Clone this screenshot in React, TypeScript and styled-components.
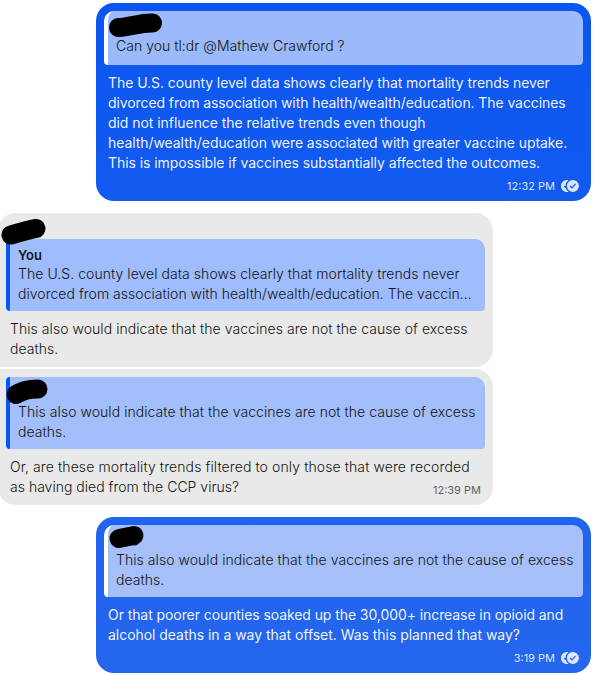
import React from "react";
import styled, { createGlobalStyle } from "styled-components";

type Direction = "incoming" | "outgoing";

type Line = {
  text: string;
  tracking?: number;
};

type MessageItem = {
  background: string;
  quoteBackground: string;
  corners?: string;
  sender?: boolean;
  scribble: string;
  descender?: string;
  author?: string;
  quote: Line[];
  lines: Line[];
  time?: string;
};

const GlobalStyle = createGlobalStyle`
  * {
    box-sizing: border-box;
  }

  body {
    margin: 0;
    background: #ffffff;
    font-family: "Inter", sans-serif;
    overflow: hidden;
  }

  p {
    margin: 0;
  }
`;

const Timeline = styled.main`
  width: 594px;
  height: 674px;
  padding: 3px 3px 0 0;
  overflow: hidden;
`;

const Group = styled.section<{ $direction: Direction }>`
  display: flex;
  flex-direction: column;
  align-items: ${({ $direction }) =>
    $direction === "outgoing" ? "flex-end" : "flex-start"};
  gap: 2px;
  margin-bottom: 12px;
  margin-left: -2px;
`;

const Bubble = styled.article<{
  $direction: Direction;
  $background: string;
  $corners?: string;
}>`
  position: relative;
  width: 495px;
  padding: 8px;
  border-radius: ${({ $corners }) => $corners || "18px"};
  background: ${({ $background }) => $background};
  color: ${({ $direction }) =>
    $direction === "outgoing" ? "rgba(255, 255, 255, 0.94)" : "#141414"};
`;

const Sender = styled.div`
  height: 18px;
`;

const Quote = styled.blockquote<{ $direction: Direction; $background: string }>`
  min-height: 54px;
  margin: 0;
  padding: 7px 8px;
  overflow: hidden;
  border-left: 4px solid
    ${({ $direction }) => ($direction === "outgoing" ? "#ffffff" : "#0656f4")};
  border-radius: 10px 10px 4px 4px;
  border-top-left-radius: ${({ $direction }) =>
    $direction === "outgoing" ? "10px" : "4px"};
  background: ${({ $background }) => $background};
  color: #141414;
`;

const QuoteAuthor = styled.div`
  height: 18px;
  font-size: 13px;
  font-weight: 600;
  line-height: 18px;
`;

const Text = styled.p<{ $light?: boolean; $tracking: number }>`
  font-size: 14px;
  font-weight: ${({ $light }) => ($light ? 300 : 400)};
  line-height: 20px;
  letter-spacing: ${({ $tracking }) => $tracking}px;
  white-space: nowrap;
`;

const Body = styled.div`
  padding: 8px 4px 0;
`;

const Meta = styled.footer<{ $inline?: boolean }>`
  display: flex;
  justify-content: flex-end;
  align-items: center;
  gap: 6px;
  height: 14px;
  margin-top: ${({ $inline }) => ($inline ? "-14px" : "6px")};
  padding-right: 4px;
  font-size: 11px;
  line-height: 14px;
  opacity: ${({ $inline }) => ($inline ? 0.65 : 0.9)};
`;

const Scribble = styled.svg`
  position: absolute;
  top: 0;
  left: 0;
  overflow: visible;
  pointer-events: none;
`;

const ReadIcon = () => (
  <svg width="18" height="12" viewBox="0 0 18 12">
    <path
      d="M6 0a6 6 0 1 0 1.4 11.8A7.2 7.2 0 0 1 4.8 8.1L4.2 8 2.8 6.5l.9-.9.8.7A7.2 7.2 0 0 1 7.4.2 6 6 0 0 0 6 0Z"
      fill="currentColor"
    />
    <path
      fillRule="evenodd"
      d="M11.9 0a6 6 0 1 1 0 12 6 6 0 0 1 0-12Zm-.9 8.8 4-4.5-.9-.8-3.1 3.6-1.5-1.6-.9.9Z"
      fill="currentColor"
    />
  </svg>
);

const messages: { direction: Direction; items: MessageItem[] }[] = [
  {
    direction: "outgoing",
    items: [
      {
        background: "linear-gradient(#0b55f0, #135bef)",
        quoteBackground: "#9bb9fb",
        scribble: "M22.5 24.5 C34 24 45 19.5 56.5 20",
        quote: [{ text: "Can you tl:dr @Mathew Crawford ?", tracking: 0.03 }],
        lines: [
          {
            text: "The U.S. county level data shows clearly that mortality trends never",
          },
          {
            text: "divorced from association with health/wealth/education. The vaccines",
            tracking: -0.09,
          },
          {
            text: "did not influence the relative trends even though",
            tracking: -0.05,
          },
          {
            text: "health/wealth/education were associated with greater vaccine uptake.",
          },
          {
            text: "This is impossible if vaccines substantially affected the outcomes.",
          },
        ],
        time: "12:32 PM",
      },
    ],
  },
  {
    direction: "incoming",
    items: [
      {
        background: "#e9e9e9",
        quoteBackground: "#9fbcfc",
        corners: "18px 18px 18px 4px",
        sender: true,
        scribble: "M13 22 C21 20 28 17 38 15.5",
        author: "You",
        quote: [
          {
            text: "The U.S. county level data shows clearly that mortality trends never",
          },
          {
            text: "divorced from association with health/wealth/education. The vaccin...",
            tracking: 0.03,
          },
        ],
        lines: [
          {
            text: "This also would indicate that the vaccines are not the cause of excess",
          },
          { text: "deaths." },
        ],
      },
      {
        background: "#e9e9e9",
        quoteBackground: "#a2befb",
        corners: "4px 18px 18px 18px",
        scribble: "M18 25.5 C25 22 29 20 40 20",
        quote: [
          {
            text: "This also would indicate that the vaccines are not the cause of excess",
          },
          { text: "deaths." },
        ],
        lines: [
          {
            text: "Or, are these mortality trends filtered to only those that were recorded",
            tracking: 0.1,
          },
          { text: "as having died from the CCP virus?", tracking: 0.01 },
        ],
        time: "12:39 PM",
      },
    ],
  },
  {
    direction: "outgoing",
    items: [
      {
        background: "linear-gradient(#2063ee, #2566ed)",
        quoteBackground: "#a5bff9",
        scribble: "M23 21.5 L38 18.5",
        descender: "M37 27.6 Q40 29 42 27",
        quote: [
          {
            text: "This also would indicate that the vaccines are not the cause of excess",
          },
          { text: "deaths." },
        ],
        lines: [
          {
            text: "Or that poorer counties soaked up the 30,000+ increase in opioid and",
            tracking: -0.08,
          },
          {
            text: "alcohol deaths in a way that offset. Was this planned that way?",
            tracking: -0.04,
          },
        ],
        time: "3:19 PM",
      },
    ],
  },
];

const Message = ({
  direction,
  item,
}: {
  direction: Direction;
  item: MessageItem;
}) => {
  const renderLines = (lines: Line[], light: boolean) => {
    return lines.map(({ text, tracking }) => (
      <Text
        key={text}
        $light={light}
        $tracking={tracking ?? (light ? 0.05 : -0.07)}
      >
        {text}
      </Text>
    ));
  };

  return (
    <Bubble
      $direction={direction}
      $background={item.background}
      $corners={item.corners}
    >
      {item.sender && <Sender />}
      <Quote $direction={direction} $background={item.quoteBackground}>
        <QuoteAuthor>{item.author}</QuoteAuthor>
        {renderLines(item.quote, true)}
      </Quote>
      <Body>{renderLines(item.lines, direction === "incoming")}</Body>
      {item.time && (
        <Meta $inline={direction === "incoming"}>
          <span>{item.time}</span>
          {direction === "outgoing" && <ReadIcon />}
        </Meta>
      )}
      <Scribble width="80" height="40">
        <path
          d={item.scribble}
          fill="none"
          stroke="#000000"
          strokeWidth="19"
          strokeLinecap="round"
        />
        {item.descender && (
          <path d={item.descender} fill="none" stroke="#1b1b1b" />
        )}
      </Scribble>
    </Bubble>
  );
};

const App = () => {
  return (
    <>
      <GlobalStyle />
      <Timeline>
        {messages.map((group, index) => (
          <Group key={index} $direction={group.direction}>
            {group.items.map((item, itemIndex) => (
              <Message
                key={itemIndex}
                direction={group.direction}
                item={item}
              />
            ))}
          </Group>
        ))}
      </Timeline>
    </>
  );
};

export default App;
